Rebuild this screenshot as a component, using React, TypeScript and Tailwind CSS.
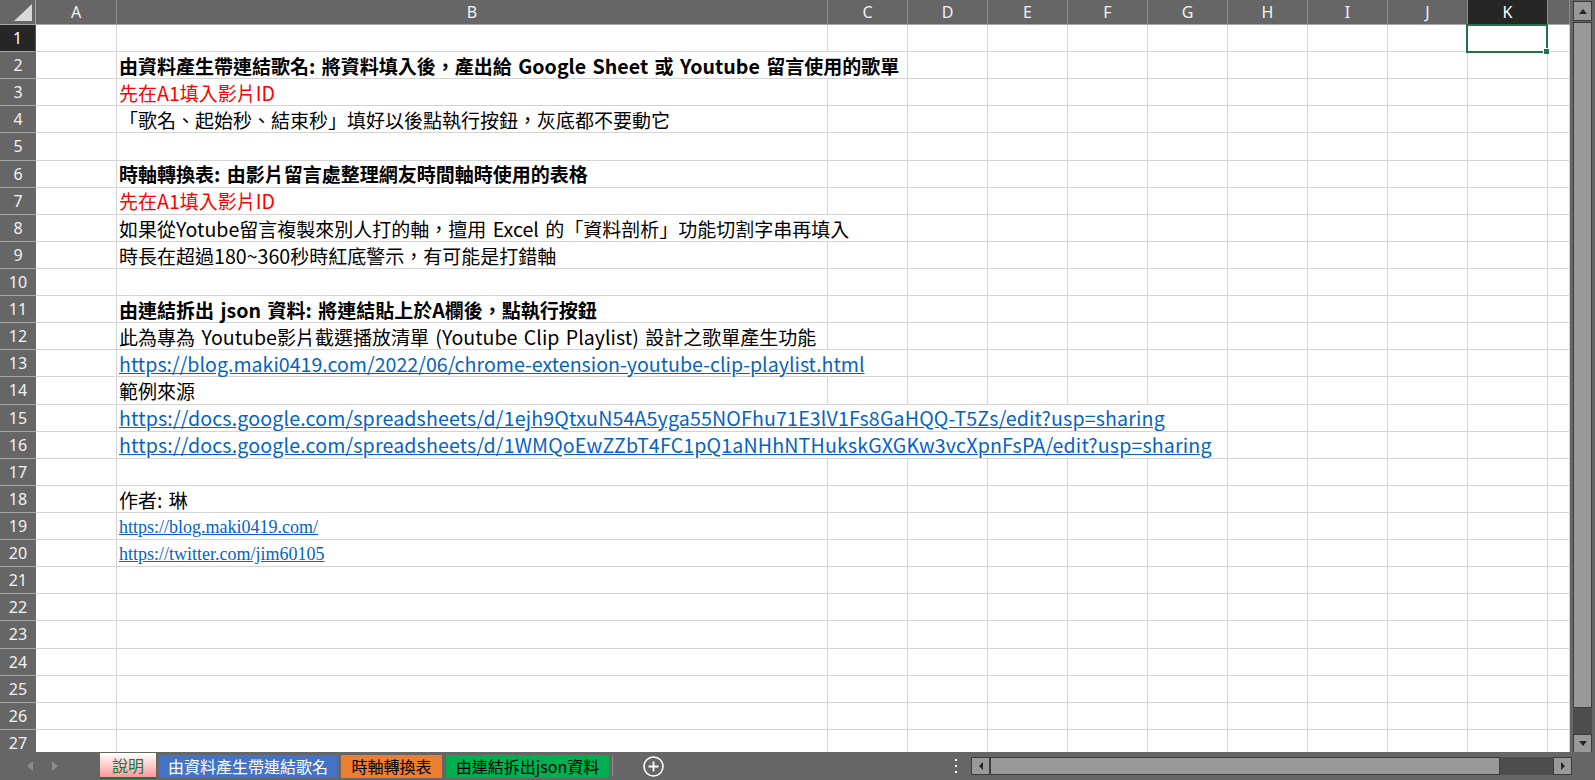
import type { ReactNode } from 'react';

const GRID = '#d4d4d4';

const COLUMNS = [
  { label: 'A', width: 'w-[81px]' },
  { label: 'B', width: 'w-[711px]' },
  { label: 'C', width: 'w-[80px]' },
  { label: 'D', width: 'w-[80px]' },
  { label: 'E', width: 'w-[80px]' },
  { label: 'F', width: 'w-[80px]' },
  { label: 'G', width: 'w-[80px]' },
  { label: 'H', width: 'w-[80px]' },
  { label: 'I', width: 'w-[80px]' },
  { label: 'J', width: 'w-[80px]' },
  { label: 'K', width: 'w-[80px]' },
  { label: '', width: 'w-[22px]' },
];

type Kind = 'bold' | 'red' | 'text' | 'link' | 'sheetLink' | 'serifLink';

const CONTENT: Record<number, { kind: Kind; text: string }> = {
  2: { kind: 'bold', text: '由資料產生帶連結歌名: 將資料填入後，產出給 Google Sheet 或 Youtube 留言使用的歌單' },
  3: { kind: 'red', text: '先在A1填入影片ID' },
  4: { kind: 'text', text: '「歌名、起始秒、結束秒」填好以後點執行按鈕，灰底都不要動它' },
  6: { kind: 'bold', text: '時軸轉換表: 由影片留言處整理網友時間軸時使用的表格' },
  7: { kind: 'red', text: '先在A1填入影片ID' },
  8: { kind: 'text', text: '如果從Yotube留言複製來別人打的軸，擅用 Excel 的「資料剖析」功能切割字串再填入' },
  9: { kind: 'text', text: '時長在超過180~360秒時紅底警示，有可能是打錯軸' },
  11: { kind: 'bold', text: '由連結拆出 json 資料: 將連結貼上於A欄後，點執行按鈕' },
  12: { kind: 'text', text: '此為專為 Youtube影片截選播放清單 (Youtube Clip Playlist) 設計之歌單產生功能' },
  13: { kind: 'link', text: 'https://blog.maki0419.com/2022/06/chrome-extension-youtube-clip-playlist.html' },
  14: { kind: 'text', text: '範例來源' },
  15: {
    kind: 'sheetLink',
    text: 'https://docs.google.com/spreadsheets/d/1ejh9QtxuN54A5yga55NOFhu71E3lV1Fs8GaHQQ-T5Zs/edit?usp=sharing',
  },
  16: {
    kind: 'sheetLink',
    text: 'https://docs.google.com/spreadsheets/d/1WMQoEwZZbT4FC1pQ1aNHhNTHukskGXGKw3vcXpnFsPA/edit?usp=sharing',
  },
  18: { kind: 'text', text: '作者: 琳' },
  19: { kind: 'serifLink', text: 'https://blog.maki0419.com/' },
  20: { kind: 'serifLink', text: 'https://twitter.com/jim60105' },
};

const SANS = "font-['Noto_Sans_CJK_TC',sans-serif] text-[19px]";

const KIND_CLASS: Record<Kind, string> = {
  bold: `font-bold text-black ${SANS}`,
  red: `text-[#ff0000] ${SANS}`,
  text: `text-black ${SANS}`,
  link: `text-[#0563c1] underline ${SANS}`,
  sheetLink: `text-[#0563c1] underline tracking-[0.15px] ${SANS}`,
  serifLink: "text-[#0563c1] underline text-[18px] font-['Liberation_Serif',serif]",
};

const LATIN = /^[\x20-\x7E]+$/;

// Excel draws the latin runs a little wider than the CJK font does
const renderRuns = (text: string) =>
  text
    .split(/([\x20-\x7E]+)/)
    .filter(Boolean)
    .map((part, i) =>
      LATIN.test(part) ? (
        <span key={i} className="text-[19.6px] [word-spacing:2px]">
          {part}
        </span>
      ) : (
        part
      ),
    );

const ROWS = Array.from({ length: 27 }, (_, i) => i + 1);

const CellText = ({ row }: { row: number }) => {
  const item = CONTENT[row];
  if (!item) return null;
  return (
    <span
      className={`relative z-10 flex h-full w-max items-center whitespace-nowrap bg-white pl-[2px] pr-1 pt-px leading-none ${KIND_CLASS[item.kind]}`}
    >
      <span>{item.kind === 'serifLink' ? item.text : renderRuns(item.text)}</span>
    </span>
  );
};

const SelectedCell = () => (
  <div className="pointer-events-none absolute -left-[2px] -top-px -right-px -bottom-[2px] z-20 border-2 border-[#217346]">
    <div className="absolute -bottom-[3px] -right-[3px] h-[6px] w-[6px] border-l border-t border-white bg-[#217346]" />
  </div>
);

const HeaderRow = () => (
  <div className="flex h-[25px] shrink-0 border-b border-[#a6a6a6] font-['Noto_Sans',sans-serif] text-[16px] text-[#f2f2f2]">
    <div className="flex w-[36px] shrink-0 items-end justify-end border-r border-[#a6a6a6] p-[3px]">
      <svg width="18" height="17" viewBox="0 0 18 17">
        <polygon points="18,0 18,17 0,17" fill="#d9d9d9" />
      </svg>
    </div>
    {COLUMNS.map(col => (
      <div
        key={col.label || 'tail'}
        className={`${col.width} flex shrink-0 items-center justify-center border-r border-[#8c8c8c] ${
          col.label === 'K' ? 'bg-[#262626] text-white' : ''
        }`}
      >
        {col.label}
      </div>
    ))}
  </div>
);

const SheetRow = ({ row }: { row: number }) => (
  <div className="flex h-[27.12px] shrink-0">
    <div
      className={`flex w-[36px] shrink-0 items-center justify-center border-b border-[#a6a6a6] font-['Noto_Sans',sans-serif] text-[16px] text-[#f2f2f2] ${
        row === 1 ? 'border-r border-r-[#217346] bg-[#262626] text-white' : ''
      }`}
    >
      {row}
    </div>
    {COLUMNS.map(col => (
      <div
        key={col.label || 'tail'}
        className={`${col.width} relative shrink-0 border-b border-r bg-white`}
        style={{ borderColor: GRID }}
      >
        {col.label === 'B' && <CellText row={row} />}
        {col.label === 'K' && row === 1 && <SelectedCell />}
      </div>
    ))}
  </div>
);

const ScrollButton = ({ children, className = '' }: { children: ReactNode; className?: string }) => (
  <div className={`flex shrink-0 items-center justify-center border border-[#3c3c3c] bg-[#999999] ${className}`}>
    {children}
  </div>
);

const VerticalScrollbar = () => (
  <div className="ml-[3px] flex h-[753px] w-[19px] shrink-0 flex-col pt-px">
    <ScrollButton className="h-[20px]">
      <svg width="8" height="5" viewBox="0 0 8 5">
        <polygon points="4,0 8,5 0,5" fill="#262626" />
      </svg>
    </ScrollButton>
    <div className="mt-px h-[686px] shrink-0 border border-[#3c3c3c] bg-[#999999]" />
    <div className="flex-1 bg-[#4d4d4d]" />
    <ScrollButton className="h-[19px]">
      <svg width="8" height="5" viewBox="0 0 8 5">
        <polygon points="0,0 8,0 4,5" fill="#262626" />
      </svg>
    </ScrollButton>
  </div>
);

const Tab = ({ label, className }: { label: string; className: string }) => (
  <div
    className={`flex shrink-0 items-center justify-center font-['Noto_Sans_CJK_TC',sans-serif] text-[16px] leading-none ${className}`}
  >
    {label}
  </div>
);

const TabBar = () => (
  <div className="flex h-[28px] shrink-0 items-center bg-[#666666]">
    <div className="flex w-[100px] shrink-0 items-center gap-[19px] pl-[27px]">
      <svg width="6" height="10" viewBox="0 0 6 10">
        <polygon points="6,0 6,10 0,5" fill="#8c8c8c" />
      </svg>
      <svg width="6" height="10" viewBox="0 0 6 10">
        <polygon points="0,0 0,10 6,5" fill="#8c8c8c" />
      </svg>
    </div>
    <Tab
      label="說明"
      className="mt-px h-[26px] w-[56px] self-start border-b-2 border-[#217346] bg-gradient-to-b from-white to-[#f59a9a] text-[#217346]"
    />
    <Tab label="由資料產生帶連結歌名" className="ml-[3px] h-[23px] w-[178px] bg-[#4472c4] text-white" />
    <Tab label="時軸轉換表" className="ml-[4px] h-[23px] w-[101px] bg-[#ed7d31] text-black" />
    <Tab label="由連結拆出json資料" className="ml-[4px] h-[23px] w-[163px] bg-[#00b050] text-black" />
    <div className="ml-[3px] h-[20px] w-px shrink-0 bg-[#8c8c8c]" />
    <svg className="ml-[30px] shrink-0" width="21" height="21" viewBox="0 0 21 21">
      <circle cx="10.5" cy="10.5" r="9.5" fill="none" stroke="white" strokeWidth="1.6" />
      <path d="M10.5 5.5v10M5.5 10.5h10" stroke="white" strokeWidth="1.8" />
    </svg>
    <div className="ml-[291px] flex h-[14px] w-[3px] shrink-0 flex-col justify-between">
      <span className="h-[2px] w-[2px] bg-white" />
      <span className="h-[2px] w-[2px] bg-white" />
      <span className="h-[2px] w-[2px] bg-white" />
    </div>
    <div className="ml-[13px] flex h-[18px] w-[601px] shrink-0">
      <ScrollButton className="w-[19px]">
        <svg width="4" height="8" viewBox="0 0 4 8">
          <polygon points="4,0 4,8 0,4" fill="#262626" />
        </svg>
      </ScrollButton>
      <div className="w-[510px] shrink-0 border border-[#3c3c3c] bg-[#999999]" />
      <div className="flex-1 bg-[#4d4d4d]" />
      <ScrollButton className="w-[19px]">
        <svg width="4" height="8" viewBox="0 0 4 8">
          <polygon points="0,0 0,8 4,4" fill="#262626" />
        </svg>
      </ScrollButton>
    </div>
  </div>
);

export default function App() {
  return (
    <div className="flex h-[780px] w-[1595px] flex-col overflow-hidden bg-[#666666]">
      <div className="flex h-[752px] shrink-0">
        <div className="flex h-full w-[1570px] shrink-0 flex-col overflow-hidden">
          <HeaderRow />
          {ROWS.map(row => (
            <SheetRow key={row} row={row} />
          ))}
        </div>
        <VerticalScrollbar />
      </div>
      <TabBar />
    </div>
  );
}
